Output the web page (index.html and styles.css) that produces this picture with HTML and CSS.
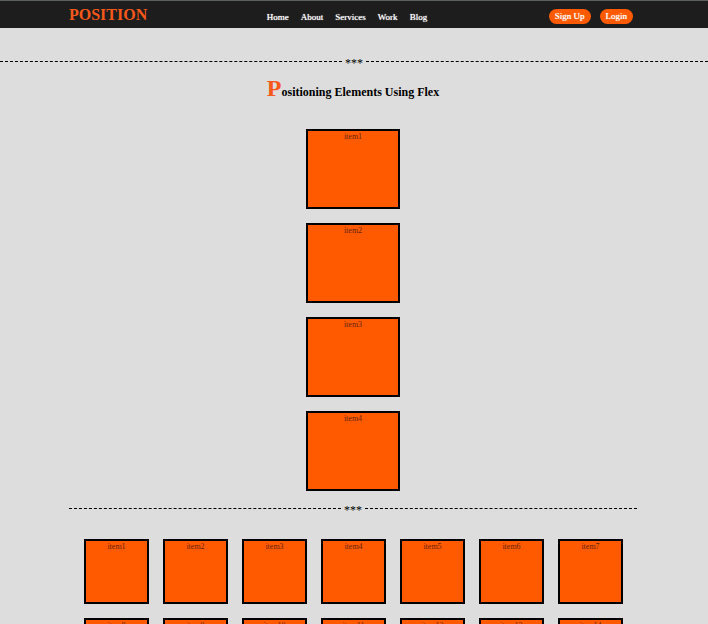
FILE: index.html
```html
<!DOCTYPE html>
<html lang="en">
<head>
<meta charset="utf-8">
<meta name="viewport" content="width=device-width, initial-scale=1">
<title>Position</title>
<link rel="stylesheet" href="styles.css">
</head>
<body>
<header class="header">
  <a class="logo" href="#">POSITION</a>
  <nav class="nav">
    <a href="#">Home</a>
    <a href="#">About</a>
    <a href="#">Services</a>
    <a href="#">Work</a>
    <a href="#">Blog</a>
  </nav>
  <div class="actions">
    <button type="button">Sign Up</button>
    <button type="button">Login</button>
  </div>
</header>
<main>
  <div class="divider"><span>***</span></div>
  <h1 class="title">Positioning Elements Using Flex</h1>
  <section class="column">
    <div class="item">item1</div>
    <div class="item">item2</div>
    <div class="item">item3</div>
    <div class="item">item4</div>
  </section>
  <section class="container">
    <div class="divider"><span>***</span></div>
    <div class="grid">
      <div class="item">item1</div>
      <div class="item">item2</div>
      <div class="item">item3</div>
      <div class="item">item4</div>
      <div class="item">item5</div>
      <div class="item">item6</div>
      <div class="item">item7</div>
      <div class="item">item8</div>
      <div class="item">item9</div>
      <div class="item">item10</div>
      <div class="item">item11</div>
      <div class="item">item12</div>
      <div class="item">item13</div>
      <div class="item">item14</div>
    </div>
  </section>
</main>
</body>
</html>
```
FILE: styles.css
```css
* {
  box-sizing: border-box;
}

body {
  margin: 0;
  background: #ddd;
  color: #000;
  font-family: "Liberation Serif", "Times New Roman", serif;
}

.header {
  display: grid;
  grid-template-columns: 1fr auto 1fr;
  align-items: center;
  height: 28px;
  padding: 2px 75px 0 69px;
  border-top: 1px solid #5c5f5f;
  background: #1d1d1d;
}

.logo {
  color: #f4591b;
  font-size: 16px;
  font-weight: bold;
  line-height: 18px;
  padding-bottom: 2px;
  text-decoration: none;
}

.nav {
  display: flex;
  gap: 12px;
  padding-top: 2px;
  margin-right: 8px;
}

.nav a {
  color: #fff;
  font-size: 9px;
  line-height: 12px;
  text-decoration: none;
  text-shadow: 0 0 1px #fff;
}

.actions {
  display: flex;
  justify-content: flex-end;
  gap: 9px;
  padding-top: 2px;
}

.actions button {
  height: 15px;
  padding: 0 6px;
  border: 0;
  border-radius: 8px;
  background: #ff5a00;
  color: #fff;
  font-family: inherit;
  font-size: 9px;
  line-height: 15px;
  text-shadow: 0 0 1px #fff;
}

.divider {
  display: flex;
  align-items: center;
  gap: 3px;
  height: 15px;
  font-size: 12px;
  line-height: 15px;
}

.divider::before,
.divider::after {
  content: "";
  flex: 1;
  border-top: 1px dashed #000;
}

.divider span {
  padding-top: 4px;
}

main > .divider {
  margin-top: 26px;
}

.title {
  margin: 5px 2px 0 0;
  font-size: 12px;
  line-height: 28px;
  text-align: center;
}

.title::first-letter {
  color: #f4591b;
  font-size: 24px;
}

.column {
  display: flex;
  flex-direction: column;
  align-items: center;
  gap: 14px;
  padding: 23px 2px 0 0;
}

.item {
  border: 2px solid #000;
  background: #ff5a00;
  color: #66230b;
  font-size: 8px;
  line-height: 11px;
  text-align: center;
}

.column .item {
  width: 94px;
  height: 80px;
}

.container {
  margin: 10px 71px 20px 69px;
}

.grid {
  display: flex;
  flex-wrap: wrap;
  gap: 14px;
  padding: 23px 14px 0 15px;
}

.grid .item {
  width: 65px;
  height: 65px;
}
```
